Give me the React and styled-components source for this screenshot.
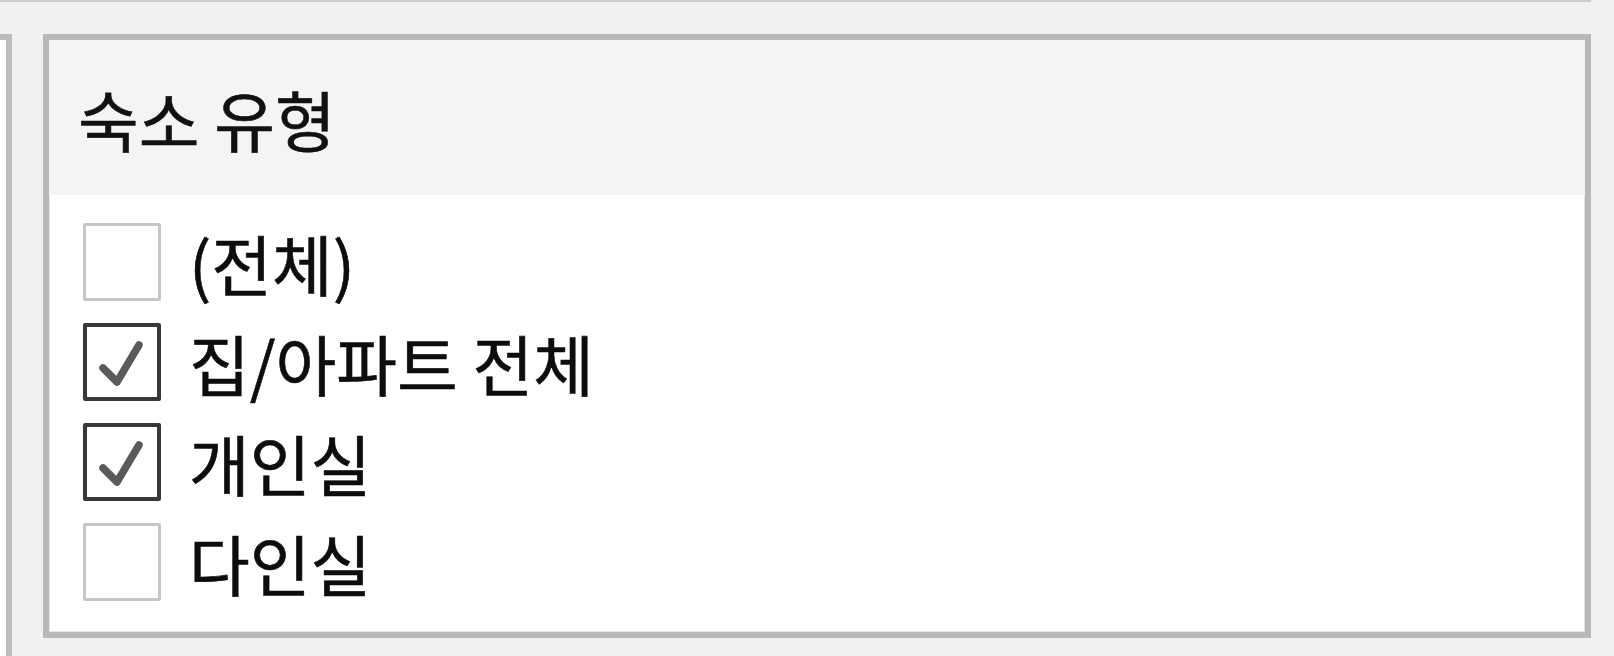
import React, { useState } from 'react';
import styled, { createGlobalStyle } from 'styled-components';

const GlobalStyle = createGlobalStyle`
  html, body {
    margin: 0;
    padding: 0;
    background: #f1f1f1;
    font-family: "Noto Sans CJK KR", "Noto Sans", sans-serif;
  }
`;

const options = [
  { id: 'all', label: '(전체)', checked: false },
  { id: 'entire', label: '집/아파트 전체', checked: true },
  { id: 'private', label: '개인실', checked: true },
  { id: 'shared', label: '다인실', checked: false },
];

const Page = styled.div`
  height: 656px;
  display: flex;
  flex-direction: column;
  overflow: hidden;
`;

const TopRule = styled.div`
  height: 2px;
  margin-right: 23px;
  background: #cdcdcd;
`;

const Row = styled.div`
  flex: 1;
  display: flex;
  gap: 31px;
  padding: 32px 23px 0 0;
`;

const SidePanel = styled.div`
  width: 6px;
  background: #fff;
  border-top: 6px solid #bcbcbc;
  border-right: 6px solid #bcbcbc;
`;

const Panel = styled.section`
  flex: 1;
  display: flex;
  flex-direction: column;
  margin-bottom: 18px;
  background: #fff;
  border: 6px solid #b8b8b8;
  box-shadow: inset 0 0 0 1px #e4e4e4;
`;

const Header = styled.div`
  height: 155px;
  display: flex;
  align-items: center;
  padding-left: 29px;
  background: #f4f4f4;
  font-size: 66px;
  color: #111;
  -webkit-text-stroke: 0.6px #111;
`;

const List = styled.ul`
  list-style: none;
  margin: 0;
  padding: 17px 0 0 34px;
`;

const Item = styled.li`
  height: 100px;
  display: flex;
  align-items: center;
  gap: 28px;
  cursor: pointer;
  user-select: none;
`;

const Box = styled.span`
  width: 78px;
  height: 78px;
  box-sizing: border-box;
  display: flex;
  border: ${p => (p.$checked ? '4px solid #383838' : '3px solid #c6c6c6')};
  border-radius: 2px;
  background: #fff;

  svg {
    width: 100%;
    height: 100%;
  }
`;

const Label = styled.span`
  font-size: 66px;
  color: #0d0d0d;
  line-height: 1;
  -webkit-text-stroke: 0.6px #0d0d0d;
`;

const CheckIcon = () => (
  <svg viewBox="0 0 70 70" fill="none">
    <path
      d="M16 41 L30 55 L52 18"
      stroke="#5a5a5a"
      strokeWidth="7.5"
      strokeLinecap="round"
      strokeLinejoin="round"
    />
  </svg>
);

const App = () => {
  const [items, setItems] = useState(options);

  const toggle = id =>
    setItems(prev => prev.map(it => (it.id === id ? { ...it, checked: !it.checked } : it)));

  return (
    <Page>
      <GlobalStyle />
      <TopRule />
      <Row>
        <SidePanel />
        <Panel>
          <Header>숙소 유형</Header>
          <List>
            {items.map(it => (
              <Item key={it.id} onClick={() => toggle(it.id)}>
                <Box $checked={it.checked}>{it.checked && <CheckIcon />}</Box>
                <Label>{it.label}</Label>
              </Item>
            ))}
          </List>
        </Panel>
      </Row>
    </Page>
  );
};

export default App;
